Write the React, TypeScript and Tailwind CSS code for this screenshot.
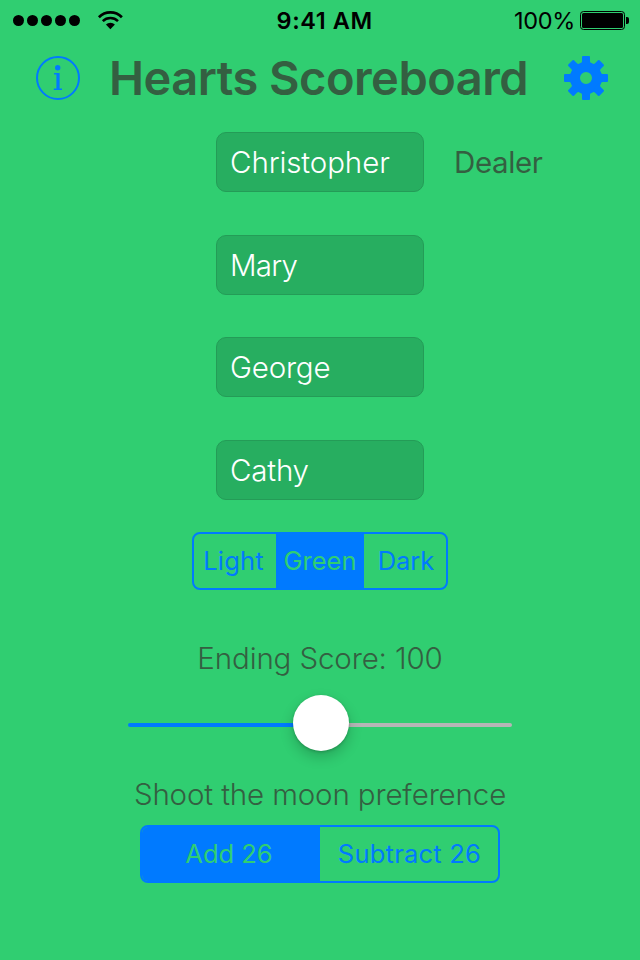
import React from "react";

const players = [
  { name: "Christopher", spacing: "tracking-[-0.1px]", gap: "mb-[43px]" },
  { name: "Mary", spacing: "tracking-[-0.8px]", gap: "mb-[42px]" },
  { name: "George", spacing: "tracking-[-0.2px]", gap: "mb-[43px]" },
  { name: "Cathy", spacing: "tracking-[-0.2px]", gap: "mb-8" },
];

function StatusBar() {
  return (
    <div className="flex h-10 items-center text-black">
      <div className="flex w-[276px] items-center pl-[13px]">
        <div className="flex gap-[3px]">
          {[0, 1, 2, 3, 4].map((i) => (
            <span key={i} className="h-[11px] w-[11px] rounded-full bg-black" />
          ))}
        </div>
        <svg className="ml-[17px]" width="26" height="20" viewBox="0 0 26 20" fill="none" stroke="#000">
          <path d="M1.9 7.2a16.2 16.2 0 0 1 23 0" strokeWidth="2.7" />
          <path d="M5.8 11.2a10.8 10.8 0 0 1 15.2 0" strokeWidth="2.5" />
          <path d="M8.9 14.6a6.4 6.4 0 0 1 9 0L13.4 19.2z" fill="#000" stroke="none" />
        </svg>
      </div>
      <div className="mt-0.5 w-[238px] whitespace-nowrap pl-[0.5px] text-[23.5px] font-semibold leading-10 tracking-[0.6px]">
        9:41 AM
      </div>
      <div className="mt-0.5 w-[66px] whitespace-nowrap text-[23.5px] leading-10 tracking-[-0.35px]">100%</div>
      <svg width="49" height="20" viewBox="0 0 49 20">
        <rect x="0.5" y="1.5" width="44" height="18" rx="3" fill="none" stroke="#000" />
        <rect x="2" y="3" width="41" height="15" rx="1.5" fill="#000" />
        <path d="M46 7h1a2 2 0 0 1 2 2v3a2 2 0 0 1-2 2h-1z" fill="#000" />
      </svg>
    </div>
  );
}

function Gear() {
  return (
    <svg width="44" height="44" viewBox="-22 -22 44 44" fill="#007aff">
      <path
        fillRule="evenodd"
        d="M0-16a16 16 0 1 0 0 32a16 16 0 1 0 0-32zM0-6a6 6 0 1 1 0 12a6 6 0 1 1 0-12z"
      />
      {[0, 45, 90, 135, 180, 225, 270, 315].map((a) => (
        <path
          key={a}
          transform={`rotate(${a})`}
          d="M-5.5-13L-4-16.5V-21Q-4-22-3-22H3Q4-22 4-21V-16.5L5.5-13z"
        />
      ))}
    </svg>
  );
}

export default function App() {
  return (
    <main className="flex h-[960px] w-[640px] flex-col overflow-hidden bg-[#30ce71] font-['Inter',sans-serif] text-[#345f41]">
      <StatusBar />
      <header className="flex h-[76px] items-center pl-9">
        <svg width="44" height="44" viewBox="0 0 44 44">
          <circle cx="22" cy="22" r="21" fill="none" stroke="#007aff" strokeWidth="2" />
          <circle cx="21.7" cy="11.7" r="2.7" fill="#007aff" />
          <path d="M18 17h5.6v15.6h2.4V34h-8.2v-1.4h2.6V18.6H18z" fill="#007aff" />
        </svg>
        <h1 className="ml-[29px] w-[455px] whitespace-nowrap text-[47px] font-semibold leading-[76px] tracking-[-0.52px]">
          Hearts Scoreboard
        </h1>
        <Gear />
      </header>
      <section className="mt-4 pl-[216px] text-[29.5px] font-light">
        {players.map((p, i) => (
          <div key={p.name} className={`flex h-[60px] items-center ${p.gap}`}>
            <div
              className={`h-[60px] w-[208px] rounded-[10px] border border-[#249c57] bg-[#27ae60] pl-[13px] leading-[59px] text-white ${p.spacing}`}
            >
              {p.name}
            </div>
            {i === 0 && <span className="ml-[30px] font-normal leading-[60px] tracking-[-0.4px]">Dealer</span>}
          </div>
        ))}
      </section>
      <div className="ml-48 flex h-[58px] w-64 overflow-hidden rounded-lg border-2 border-[#007aff] text-center text-[25.5px] leading-[54px] text-[#007aff]">
        <span className="w-[82px] pr-[3px] tracking-[0.2px]">Light</span>
        <span className="w-[88px] bg-[#007aff] text-[#30ce71]">Green</span>
        <span className="w-[82px] pl-0.5">Dark</span>
      </div>
      <p className="mt-12 h-10 text-center text-[29.5px] font-light leading-10 tracking-[-0.13px]">Ending Score: 100</p>
      <div className="ml-32 mt-[17px] flex h-14 w-96 items-center">
        <span className="mt-1 h-1 w-[167px] rounded-l-full bg-[#007aff]" />
        <span className="z-10 -mx-0.5 h-14 w-14 rounded-full bg-white shadow-[0_6px_14px_rgba(0,0,0,0.2),0_1px_3px_rgba(0,0,0,0.2)]" />
        <span className="mt-1 h-1 flex-1 rounded-r-full bg-[#b6b6b6]" />
      </div>
      <p className="mt-[23px] h-10 text-center text-[29.5px] font-light leading-10 tracking-[-0.14px]">
        Shoot the moon preference
      </p>
      <div className="ml-[140px] mt-[11px] flex h-[58px] w-[360px] overflow-hidden rounded-lg border-2 border-[#007aff] text-center text-[25.5px] leading-[54px] text-[#007aff]">
        <span className="w-[178px] bg-[#007aff] pr-1 text-[#30ce71]">Add 26</span>
        <span className="w-[178px] pl-px tracking-[0.23px]">Subtract 26</span>
      </div>
    </main>
  );
}
